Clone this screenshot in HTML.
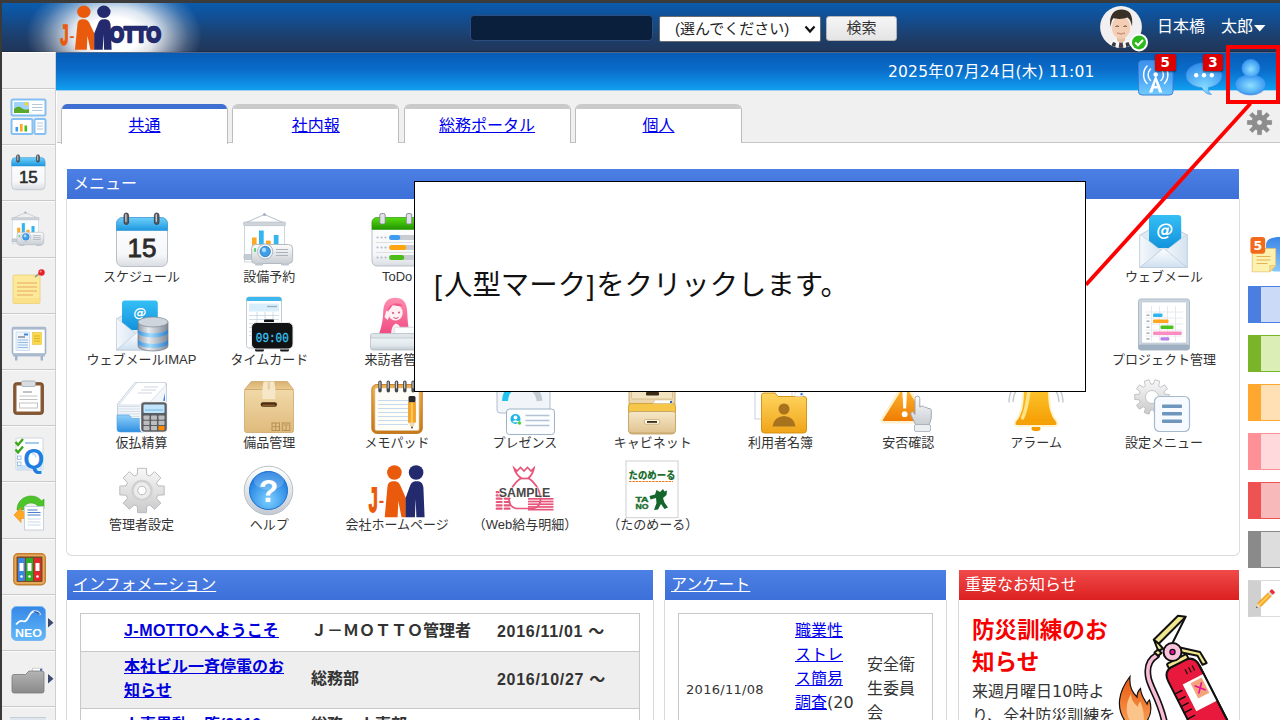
<!DOCTYPE html>
<html lang="ja">
<head>
<meta charset="utf-8">
<title>J-MOTTO</title>
<style>
*{box-sizing:border-box;margin:0;padding:0}
html,body{width:1280px;height:720px;overflow:hidden;background:#fff}
body{position:relative;font-family:"Liberation Sans","Noto Sans CJK JP",sans-serif;font-size:13px;color:#333}
.abs{position:absolute}
a{color:#0000ee;text-decoration:underline}
/* top */
#strip{left:0;top:0;width:1280px;height:3px;background:#3b3b3b}
#topbar{left:0;top:3px;width:1280px;height:49px;background:linear-gradient(#0a5cad 0%,#0f529c 22%,#18477f 50%,#1e3d68 76%,#20365a 100%);border-bottom:1px solid #1a2c48}
#glow{left:20px;top:3px;width:190px;height:49px;background:radial-gradient(ellipse 88px 56px at 94px 32px,rgba(255,255,255,1) 0%,rgba(255,255,255,1) 30%,rgba(255,255,255,.85) 48%,rgba(255,255,255,.5) 66%,rgba(255,255,255,.18) 84%,rgba(255,255,255,0) 100%)}
#leftdark{left:0;top:3px;width:80px;height:49px;background:linear-gradient(90deg,rgba(20,40,70,.0),rgba(20,40,70,0))}
#search{left:470px;top:15px;width:183px;height:26px;background:#0a1f3b;border:1px solid #2b4d80;border-radius:4px}
#sel{left:659px;top:16px;width:162px;height:26px;background:#fff;border:1px solid #6d6d6d;border-radius:2px;font-size:15px;color:#222;line-height:23px;padding-left:15px;white-space:nowrap}
#btn{left:826px;top:16px;width:71px;height:25px;background:linear-gradient(#f6f6f6,#e4e4e4);border:1px solid #b5b5b5;border-radius:3px;font-size:15px;color:#333;text-align:center;line-height:21px}
#uname{left:1157px;top:15px;font-size:16px;color:#fff;white-space:nowrap;line-height:24px}
/* second bar */
#bar2{left:56px;top:53px;width:1224px;height:37px;background:linear-gradient(#075bb5 0%,#0a6cc9 45%,#0e8be2 80%,#10a0ee 100%)}
#barsep{left:56px;top:52px;width:1224px;height:1px;background:#53688a}
#bar2line{left:56px;top:90px;width:1224px;height:1px;background:#9fd0f0}
#date{left:888px;top:61px;font-family:'DejaVu Sans','Noto Sans CJK JP',sans-serif;font-size:15.500px;letter-spacing:.200px;color:#fff;white-space:nowrap;line-height:22px}
/* sidebar */
#side{left:0;top:52px;width:56px;height:668px;background:#f0f0f0;border-right:1px solid #cfcfcf;border-top:1px solid #fff}
#sideedge{left:0;top:0;width:2px;height:720px;background:#3a3a3a}
.sep{left:2px;width:53px;height:2px;background:#c9c9c9;border-bottom:1px solid #fbfbfb}
/* tabs */
#tabbg{left:57px;top:91px;width:1223px;height:51px;background:#f0f0f0}
#tabline{left:57px;top:142px;width:1223px;height:1px;background:#c4c4c4}
.tab{top:103.500px;width:167px;height:39.500px;background:#fff;border:1.500px solid #bcbcbc;border-top:none;border-bottom:none;border-radius:6px 6px 0 0;overflow:hidden;text-align:center;font-size:16px;line-height:20px;padding-top:12.500px}
.tab:before{content:"";position:absolute;left:0;top:0;right:0;height:5.800px;background:#cacaca}
.tab.on{height:40px}
.tab.on:before{background:#3f6fd0}
/* panels */
.ph{height:30px;background:linear-gradient(#4c80e4,#3d70d8);color:#fff;font-size:16px;line-height:29px;padding-left:6px;white-space:nowrap}
.ph a{color:#fff}
.pb{border:1px solid #d9d9d9;border-top:none;background:#fff}
.mi{width:128px;text-align:center;font-size:13px;color:#333;line-height:16px;white-space:nowrap}
.it{font-size:16px;font-weight:bold;line-height:24px;white-space:nowrap;color:#333}
.it a{color:#0000dd}
.dt{letter-spacing:.7px}
/* callout */
#callout{left:414px;top:181px;width:672px;height:211px;background:#fff;border:1px solid #000}
#ctext{left:434px;top:264px;font-size:28.400px;line-height:42px;color:#111;white-space:nowrap}
#redbox{left:1226px;top:45px;width:54px;height:59px;border:4px solid #ff0000}
</style>
</head>
<body>
<div id="strip" class="abs"></div>
<div id="topbar" class="abs"></div>
<div id="glow" class="abs"></div>
<div id="search" class="abs"></div>
<div id="sel" class="abs">(選んでください)</div>
<div id="btn" class="abs">検索</div>
<div id="uname" class="abs">日本橋　太郎</div>
<div id="bar2" class="abs"></div>
<div id="bar2line" class="abs"></div><div id="barsep" class="abs"></div>
<div id="date" class="abs">2025年07月24日(木) 11:01</div>

<div id="side" class="abs"></div>
<div id="sideedge" class="abs"></div>
<div class="abs sep" style="top:88px"></div>
<div class="abs sep" style="top:144px"></div>
<div class="abs sep" style="top:200px"></div>
<div class="abs sep" style="top:257px"></div>
<div class="abs sep" style="top:313px"></div>
<div class="abs sep" style="top:369px"></div>
<div class="abs sep" style="top:425px"></div>
<div class="abs sep" style="top:481px"></div>
<div class="abs sep" style="top:538px"></div>
<div class="abs sep" style="top:594px"></div>
<div class="abs sep" style="top:650px"></div>
<div class="abs sep" style="top:706px"></div>
<svg class="abs" style="left:10.5px;top:98.6px;overflow:visible" width="35" height="36" viewBox="0 0 35 36"><rect x=".5" y=".5" width="34" height="16" rx="1.500" fill="#fff" stroke="#86c0f2" stroke-width="2"/>
<rect x="3" y="3" width="15" height="11" fill="#9fd4f8"/><path d="M3 14V10q4-4 7.500-1t7.500 1v4z" fill="#5aa82a"/><circle cx="15.500" cy="5" r="1.800" fill="#ffd21e"/>
<path d="M21 5.500h10.500M21 8.500h10.500M21 11.500h10.500" stroke="#b9c8d6" stroke-width="1.200"/>
<rect x=".5" y="20" width="21" height="15" rx="1.500" fill="#fff" stroke="#86c0f2" stroke-width="2"/>
<rect x="4.500" y="28" width="2.600" height="4.500" fill="#3a9af0"/><rect x="9" y="25" width="2.600" height="7.500" fill="#ffa51e"/><rect x="13.500" y="26.500" width="2.600" height="6" fill="#4cbc1a"/>
<rect x="23.500" y="20" width="11" height="15" rx="1.500" fill="#fff" stroke="#86c0f2" stroke-width="2"/>
<path d="M26 24h6M26 27h6M26 30h6" stroke="#b9c8d6" stroke-width="1.200"/></svg>
<svg class="abs" style="left:9.5px;top:154.4px;overflow:visible" width="36.7" height="36.7" viewBox="0 0 56 56"><rect x="2.5" y="5.5" width="51" height="49" rx="6" fill="url(#gPaper)" stroke="#b9bfc7"/>
<path d="M2.5 18.5V11.5a6 6 0 0 1 6-6h39a6 6 0 0 1 6 6v7z" fill="url(#gBlueH)" stroke="#2a92d4" stroke-width=".6"/>
<rect x="10" y="1" width="4.6" height="11.5" rx="2.3" fill="#5a5f66" stroke="#33373c" stroke-width=".8"/><rect x="11.2" y="2" width="1.4" height="8" rx=".7" fill="#c8ccd2"/>
<rect x="40.4" y="1" width="4.6" height="11.5" rx="2.3" fill="#5a5f66" stroke="#33373c" stroke-width=".8"/><rect x="41.6" y="2" width="1.4" height="8" rx=".7" fill="#c8ccd2"/>
<text x="28" y="45" text-anchor="middle" font-family="Liberation Sans,sans-serif" font-size="26" fill="#2b2b2b" stroke="#2b2b2b" stroke-width=".900">15</text></svg>
<svg class="abs" style="left:9.5px;top:210.9px;overflow:visible" width="36.7" height="36.7" viewBox="0 0 56 56"><path d="M23.5 2.5L5 10.5M23.5 2.5L42 10.5" stroke="#b9c0c8" stroke-width="1" fill="none"/><circle cx="23.5" cy="2.5" r="1.6" fill="#aab2bb"/>
<rect x="3.5" y="13" width="40" height="37" fill="#fdfeff" stroke="#cfd5dc"/>
<rect x="2.5" y="10" width="42" height="3.6" rx="1" fill="#cdd4db" stroke="#b4bcc5" stroke-width=".6"/>
<rect x="11" y="25.5" width="4.6" height="20" fill="#ffa826"/><rect x="18" y="18.5" width="4.7" height="26" fill="#33b5ee"/>
<rect x="25" y="28.6" width="4.7" height="14" fill="#ffa826"/><rect x="32.8" y="23" width="4.7" height="20" fill="#33b5ee"/>
<rect x="3" y="42.5" width="8" height="5" rx="1.5" fill="#c5ccd4" stroke="#a9b1ba" stroke-width=".6"/>
<rect x="10.6" y="32.5" width="41" height="19" rx="4" fill="url(#gSilver)" stroke="#b3bac2"/>
<rect x="14" y="51" width="8" height="2.5" rx="1" fill="#c0c6cd"/><rect x="40" y="51" width="8" height="2.5" rx="1" fill="#c0c6cd"/>
<circle cx="24.2" cy="39.5" r="7.6" fill="#f4f6f8" stroke="#aeb6bf"/><circle cx="24.2" cy="39.5" r="5.2" fill="#3f9fe8" stroke="#2a78c0" stroke-width=".8"/><circle cx="23" cy="38" r="2.2" fill="#a8dcff"/>
<path d="M35 37.5h12M35 40.5h12M35 43.5h12" stroke="#aab2bb" stroke-width="1.2"/>
<rect x="13.2" y="36" width="1.6" height="4" rx=".8" fill="#35c84a"/></svg>
<svg class="abs" style="left:13px;top:270px;overflow:visible" width="32" height="34" viewBox="0 0 32 34"><rect x="0" y="5" width="27" height="28.500" rx="1" fill="#fde99a" stroke="#e8cc78" stroke-width=".8"/>
<path d="M0 28h27v5.500H0z" fill="#f9dc80" opacity=".6"/>
<path d="M4 13h20M4 17h20M4 21h20M4 25h16" stroke="#e8a860" stroke-width="1"/>
<path d="M22 7l4.500-3.500" stroke="#999" stroke-width="1.600"/><circle cx="28.500" cy="2.500" r="3.200" fill="#e8202a"/><circle cx="27.600" cy="1.600" r="1" fill="#ff9a9a"/></svg>
<svg class="abs" style="left:11.5px;top:326.5px;overflow:visible" width="34" height="34" viewBox="0 0 34 34"><rect x=".500" y=".500" width="33" height="26.500" rx="1" fill="#fff" stroke="#9fb2c8" stroke-width="1.600"/>
<rect x="0" y="0" width="34" height="2.600" fill="#a9bace"/>
<rect x="4" y="5" width="13.500" height="18.500" fill="#eef5fc" stroke="#b9cbe0" stroke-width=".6"/><rect x="12" y="6.500" width="4" height="2" fill="#3a8ae0"/><path d="M6 10h7" stroke="#556" stroke-width="1"/><path d="M5.500 13h10.500M5.500 15.500h10.500M5.500 18h10.500M5.500 20.500h10.500" stroke="#8ab4e0" stroke-width=".9"/>
<rect x="20.500" y="5.500" width="9" height="12" fill="#fbd84a" stroke="#e0b830" stroke-width=".5"/><path d="M22 9h6M22 11.500h6M22 14h6" stroke="#d8a820" stroke-width=".8"/>
<rect x="1" y="27" width="32" height="2.400" fill="#a9bace"/><rect x="3" y="29" width="2.400" height="4.500" fill="#9fb2c8"/><rect x="28.600" y="29" width="2.400" height="4.500" fill="#9fb2c8"/></svg>
<svg class="abs" style="left:12.7px;top:380.8px;overflow:visible" width="31" height="34" viewBox="0 0 31 34"><rect x=".800" y="1.800" width="29.500" height="31.500" rx="2.500" fill="#8a5a34" stroke="#6e4424" stroke-width="1"/>
<rect x="3.500" y="4.500" width="24" height="26" fill="#fff"/>
<rect x="8.500" y="0" width="14" height="5.500" rx="1.500" fill="#d9dde2" stroke="#9aa2ab" stroke-width=".7"/>
<path d="M10 11h9" stroke="#999" stroke-width="1.200"/><path d="M6.500 15h18M6.500 18.500h18" stroke="#c3c3c3" stroke-width="1.200"/><rect x="6.500" y="22" width="18" height="5" fill="none" stroke="#c3c3c3" stroke-width="1"/></svg>
<svg class="abs" style="left:13.5px;top:437px;overflow:visible" width="31" height="35" viewBox="0 0 31 35"><rect x="2" y="1" width="27" height="32" rx="1" fill="#fff" stroke="#c9d3de" stroke-width=".9"/><path d="M3 28h25v5H3z" fill="#cfe4f8"/>
<path d="M11 6h14" stroke="#6aa8e0" stroke-width="1.200"/>
<path d="M1.500 5l2.500 3l5-6" stroke="#3aa81a" stroke-width="2.400" fill="none"/><path d="M1.500 12.500l2.500 3l5-6" stroke="#3aa81a" stroke-width="2.400" fill="none"/>
<rect x="3.500" y="19" width="3.500" height="3.500" fill="#fff" stroke="#8ab4e0" stroke-width=".8"/><rect x="3.500" y="25" width="3.500" height="3.500" fill="#fff" stroke="#8ab4e0" stroke-width=".8"/>
<text x="19.800" y="31" text-anchor="middle" font-family="Liberation Sans,sans-serif" font-weight="bold" font-size="27" fill="#1f7fe0" stroke="#fff" stroke-width="1" paint-order="stroke">Q</text>
<path d="M18 17q4-1 4 3.500" stroke="#bfe0ff" stroke-width="1.500" fill="none"/></svg>
<svg class="abs" style="left:13.5px;top:495.5px;overflow:visible" width="31" height="35" viewBox="0 0 31 35"><path d="M3 14C3 5 10 0 17 0c5 0 8.500 2 10.500 5l2.500-2v9.500H20.500l3-2.800C22 8 20 7 17 7C12.500 7 9.500 10 9.500 14z" fill="#4cc42a" stroke="#3aa41c" stroke-width=".6"/>
<path d="M0 19l7-7.500v4h5.500v7H7V26.500z" fill="#ffa826" stroke="#e88a10" stroke-width=".6"/>
<rect x="10.500" y="10.500" width="19" height="23.500" fill="#fff" stroke="#c3ccd6" stroke-width=".9"/>
<path d="M13.500 14h10M13.500 16.500h13M13.500 19h13" stroke="#4a7ec8" stroke-width="1.100"/><path d="M13.500 23h13M13.500 26h13M13.500 29h13" stroke="#c8d8ea" stroke-width="1.100"/></svg>
<svg class="abs" style="left:12.5px;top:552.5px;overflow:visible" width="33" height="33" viewBox="0 0 33 33"><rect x=".800" y=".800" width="31.500" height="31" rx="4" fill="#e8a85a" stroke="#c4802e" stroke-width="1.400"/>
<rect x="3.500" y="3.500" width="26" height="25.500" rx="1" fill="#7a4c24"/>
<rect x="5" y="5" width="7" height="23" rx="1" fill="#3a86e0"/><rect x="13" y="5" width="7" height="23" rx="1" fill="#2fae2a"/><rect x="21" y="5" width="7" height="23" rx="1" fill="#e0282a"/>
<g fill="#fff"><rect x="6.500" y="10" width="4" height="8"/><rect x="14.500" y="10" width="4" height="8"/><rect x="22.500" y="10" width="4" height="8"/><circle cx="8.500" cy="23.500" r="1.300"/><circle cx="16.500" cy="23.500" r="1.300"/><circle cx="24.500" cy="23.500" r="1.300"/></g></svg>
<svg class="abs" style="left:10.8px;top:605.6px;overflow:visible" width="35" height="35" viewBox="0 0 35 35"><defs><linearGradient id="gNeo" x1="0" y1="0" x2="0" y2="1"><stop offset="0" stop-color="#3688e6"/><stop offset="1" stop-color="#62b8f8"/></linearGradient></defs>
<rect x=".500" y=".500" width="34" height="34" rx="5" fill="url(#gNeo)" stroke="#7ab6f0" stroke-width="1"/>
<path d="M5 18.500c3-3.500 5-4.500 7-3.200c2 .7 3.500-.5 5-3.300c2-4 3.500-7 7-6.800c3 0 4.500 1.800 5.500 4" stroke="#fff" stroke-width="1.700" fill="none"/><path d="M22 5.500q5-1.500 8 4q-4-3-8-4z" fill="#2a4e9a"/>
<text x="17.500" y="30.500" text-anchor="middle" font-family="Liberation Sans,sans-serif" font-weight="bold" font-size="11.500" fill="#fff" textLength="27" lengthAdjust="spacingAndGlyphs">NEO</text></svg>
<svg class="abs" style="left:47.8px;top:617.5px;overflow:visible" width="6" height="10" viewBox="0 0 6 10"><path d="M0 0L5.500 4.700L0 9.400z" fill="#3c4a6e"/></svg>
<svg class="abs" style="left:12px;top:668px;overflow:visible" width="32" height="26" viewBox="0 0 32 26"><defs><linearGradient id="gFld" x1="0" y1="0" x2="0" y2="1"><stop offset="0" stop-color="#b4b4b4"/><stop offset="1" stop-color="#8a8a8a"/></linearGradient></defs>
<path d="M20.500 .300h10v4h-10z" fill="#fff" stroke="#aaa" stroke-width=".5"/><rect x="28" y=".800" width="2" height="2" fill="#3a5ad0"/>
<path d="M0 8.500a2 2 0 0 1 2-2h11.500l3.500-3.500H30a2 2 0 0 1 2 2V23a2 2 0 0 1-2 2H2a2 2 0 0 1-2-2z" fill="url(#gFld)" stroke="#7a7a7a" stroke-width=".8"/></svg>
<svg class="abs" style="left:47.8px;top:674.3px;overflow:visible" width="6" height="10" viewBox="0 0 6 10"><path d="M0 0L5.500 4.700L0 9.400z" fill="#3c4a6e"/></svg>
<div class="abs" style="left:10px;top:717px;width:36px;height:3px;background:#dfe6ee;border-top:1px solid #c3ced9"></div>

<div id="tabbg" class="abs"></div>
<div id="tabline" class="abs"></div>
<div class="abs tab on" style="left:61px"><a>共通</a></div>
<div class="abs tab" style="left:232.300px"><a>社内報</a></div>
<div class="abs tab" style="left:403.600px"><a>総務ポータル</a></div>
<div class="abs tab" style="left:575px"><a>個人</a></div>

<svg class="abs" style="left:0px;top:0px;overflow:visible" width="200" height="56" viewBox="0 0 200 56"><g transform="translate(60.5,3.7) scale(.92,.85)">
<text x="-.200" y="48.600" font-family="Liberation Sans,sans-serif" font-weight="bold" font-size="35" fill="#ea5a0c" stroke="#ea5a0c" stroke-width="1.800" textLength="9" lengthAdjust="spacingAndGlyphs">J</text>
<text x="9.800" y="43.500" font-family="Liberation Sans,sans-serif" font-weight="bold" font-size="18" fill="#ea5a0c" textLength="5.400" lengthAdjust="spacingAndGlyphs">-</text>
<circle cx="25.400" cy="9.500" r="7.300" fill="#ea5a0c"/>
<path d="M15.700 54.200L18.400 24.500C18.800 19.500 21 18.200 24.800 18.200C28.800 18.200 30.400 20 31.800 23.500L36.800 35V54.200H32.500L29.300 38L28.600 54.200Z" fill="#ea5a0c"/>
<circle cx="47.100" cy="9.500" r="7.300" fill="#232b6e"/>
<path d="M36.600 54.200V35L40.800 23.500C42 19.800 43.800 18.200 47.400 18.200C52 18.200 53.800 20 54.400 24.500L55.600 54.200H47.400L46.700 36L45.900 54.200Z" fill="#232b6e"/>
</g><text x="109.600" y="42.400" font-family="Liberation Sans,sans-serif" font-weight="bold" font-size="21.500" fill="#232b6e" stroke="#232b6e" stroke-width="2.400" stroke-linejoin="round" textLength="51.400" lengthAdjust="spacingAndGlyphs">OTTO</text></svg>
<svg class="abs" style="left:803.5px;top:23.5px;overflow:visible" width="12" height="10" viewBox="0 0 12 10"><path d="M1.500 2.500L6 7.500L10.500 2.500" fill="none" stroke="#111" stroke-width="2.200"/></svg>
<svg class="abs" style="left:1099.8px;top:6px;overflow:visible" width="50" height="50" viewBox="0 0 50 50"><defs><clipPath id="avc"><circle cx="21" cy="21" r="20.900"/></clipPath></defs>
<circle cx="21" cy="21" r="20.900" fill="#f1efef"/>
<g clip-path="url(#avc)">
<path d="M8 42q1-7 9-8.500l4 2l4-2q9 1.500 10 8.500z" fill="#f8f8fa"/>
<path d="M10.500 42l2.500-6l3 1l-1 5zM31 42l-2.500-6l-3 1l1 5z" fill="#3b3a40"/>
<path d="M19.500 36l1.500-1.500l1.500 1.500l1 6h-5z" fill="#4a3f48"/>
<path d="M17 28h8v7l-4 2l-4-2z" fill="#e9bfa4"/>
<ellipse cx="21" cy="21.500" rx="9.300" ry="11" fill="#f3cdb4"/>
<path d="M10.500 21C8.500 9 14 3.500 21.500 3.500S33.500 8 32 20.500C31 15.500 29.500 12.500 27.500 11.500C24 13 17 13.500 13.500 12C11.500 14 11.200 17 10.500 21z" fill="#3a3028"/>
<path d="M15.500 20.500q1.800-1 3.400 0M23.500 20.500q1.800-1 3.400 0" stroke="#5a4030" stroke-width="1" fill="none"/>
<path d="M17 27q4 3 8 0q-4 1.200-8 0z" fill="#fff" stroke="#b9705a" stroke-width=".6"/>
</g>
<circle cx="39" cy="36.400" r="9" fill="#fff"/><circle cx="39" cy="36.400" r="7" fill="#2db81c"/>
<path d="M35.200 36.500l2.800 2.800l5-5.300" stroke="#fff" stroke-width="2" fill="none"/></svg>
<svg class="abs" style="left:1254px;top:25px;overflow:visible" width="12" height="8" viewBox="0 0 12 8"><path d="M0 0h11.500L5.750 6.500z" fill="#fff"/></svg>
<svg class="abs" style="left:1138px;top:60.3px;overflow:visible" width="36" height="36" viewBox="0 0 36 36"><defs><linearGradient id="gAnt" x1="0" y1="0" x2="0" y2="1"><stop offset="0" stop-color="#3f92ee"/><stop offset=".5" stop-color="#4aa4f4"/><stop offset="1" stop-color="#72ccff"/></linearGradient>
<radialGradient id="gChat" cx=".5" cy=".8" r=".8"><stop offset="0" stop-color="#86dcff"/><stop offset="1" stop-color="#2f8cec"/></radialGradient></defs>
<rect x=".5" y=".5" width="34.500" height="34.500" rx="3.500" fill="url(#gAnt)" stroke="#3a7fd6" stroke-width="1"/>
<circle cx="17.700" cy="14.500" r="2.300" fill="#fff"/>
<path d="M17.700 15L24.500 32.500H21L19.700 28.500H15.700L14.400 32.500H11zM17.700 21.500l-1.200 4.500h2.400z" fill="#fff"/>
<g fill="none" stroke="#fff" stroke-width="1.500" stroke-linecap="round"><path d="M12.500 9a8 8 0 0 0 0 11.500M9 6a13 13 0 0 0 0 17.500"/><path d="M23 9a8 8 0 0 1 0 11.500M26.500 6a13 13 0 0 1 0 17.500"/></g></svg>
<svg class="abs" style="left:1185.8px;top:63.2px;overflow:visible" width="36" height="32" viewBox="0 0 36 32"><path d="M18 0C28 0 36 5.500 36 12.500C36 18.500 30 23.500 22.500 24.500C22 28 23.500 30 25.500 31.500C20.500 31.500 17.500 28.500 16 24.800C7 24 0 19 0 12.500C0 5.500 8 0 18 0z" fill="url(#gChat)" stroke="#3a86e0" stroke-width=".6"/>
<circle cx="10.200" cy="12.200" r="2.200" fill="#fff"/><circle cx="18" cy="12.200" r="2.200" fill="#fff"/><circle cx="25.800" cy="12.200" r="2.200" fill="#fff"/></svg>
<div class="abs" style="left:1155px;top:54.300px;width:20.600px;height:16.800px;background:#dc0000;border-radius:2px;box-shadow:0 1px 2px rgba(0,0,0,.55);color:#fff;font:bold 13.500px/16.500px 'DejaVu Sans',sans-serif;text-align:center">5</div>
<div class="abs" style="left:1202.7px;top:54.300px;width:20.600px;height:16.800px;background:#dc0000;border-radius:2px;box-shadow:0 1px 2px rgba(0,0,0,.55);color:#fff;font:bold 13.500px/16.500px 'DejaVu Sans',sans-serif;text-align:center">3</div>
<svg class="abs" style="left:1235.2px;top:59px;overflow:visible" width="32" height="37" viewBox="0 0 32 37"><ellipse cx="15.500" cy="25.500" rx="15.300" ry="10" fill="url(#gPerson)" stroke="#2f86e6" stroke-width=".5"/>
<path d="M.5 27a15 8 0 0 0 30 0a15 9.500 0 0 1-30 0z" fill="#2a7ee0" opacity=".55"/>
<circle cx="15.800" cy="9.200" r="9" fill="url(#gPerson)" stroke="#3a8ce8" stroke-width=".5"/></svg>
<svg class="abs" style="left:1246.5px;top:110px;overflow:visible" width="25" height="25" viewBox="0 0 25 25"><path d="M24.6 10.5 L24.6 14.5 L20.0 14.5 L19.2 16.4 L22.5 19.7 L19.7 22.5 L16.4 19.2 L14.5 20.0 L14.5 24.6 L10.5 24.6 L10.5 20.0 L8.6 19.2 L5.3 22.5 L2.5 19.7 L5.8 16.4 L5.0 14.5 L0.4 14.5 L0.4 10.5 L5.0 10.5 L5.8 8.6 L2.5 5.3 L5.3 2.5 L8.6 5.8 L10.5 5.0 L10.5 0.4 L14.5 0.4 L14.5 5.0 L16.4 5.8 L19.7 2.5 L22.5 5.3 L19.2 8.6 L20.0 10.5Z" fill="#8d8d8d" stroke="#7a7a7a" stroke-width=".5"/><circle cx="12.500" cy="12.500" r="2.800" fill="#f0f0f0" stroke="#777" stroke-width=".6"/></svg>
<!-- menu panel -->
<div class="abs ph" style="left:67px;top:169px;width:1172px">メニュー</div>
<div class="abs pb" style="left:66px;top:199px;width:1174px;height:357px;border-radius:0 0 6px 6px;border-width:1.500px;border-color:#dcdcdc"></div>

<svg width="0" height="0" style="position:absolute"><defs>
<linearGradient id="gBlueH" x1="0" y1="0" x2="0" y2="1"><stop offset="0" stop-color="#6fd0fa"/><stop offset="1" stop-color="#1c97df"/></linearGradient>
<linearGradient id="gPaper" x1="0" y1="0" x2="0" y2="1"><stop offset="0" stop-color="#ffffff"/><stop offset=".75" stop-color="#f6f7f9"/><stop offset="1" stop-color="#d9dde2"/></linearGradient>
<linearGradient id="gGreenH" x1="0" y1="0" x2="0" y2="1"><stop offset="0" stop-color="#55dd10"/><stop offset="1" stop-color="#239400"/></linearGradient>
<linearGradient id="gSilver" x1="0" y1="0" x2="0" y2="1"><stop offset="0" stop-color="#fdfdfd"/><stop offset="1" stop-color="#c9ced4"/></linearGradient>
<linearGradient id="gEnv" x1="0" y1="0" x2="0" y2="1"><stop offset="0" stop-color="#ffffff"/><stop offset="1" stop-color="#cfe0f0"/></linearGradient>
<linearGradient id="gEnvS" x1="0" y1="0" x2="1" y2="0"><stop offset="0" stop-color="#f4f8fc"/><stop offset="1" stop-color="#d4e2f0"/></linearGradient>
<linearGradient id="gCard" x1="0" y1="0" x2="0" y2="1"><stop offset="0" stop-color="#35bff5"/><stop offset="1" stop-color="#1293dc"/></linearGradient>
<linearGradient id="gBox" x1="0" y1="0" x2="0" y2="1"><stop offset="0" stop-color="#f1d9a8"/><stop offset="1" stop-color="#dfba7c"/></linearGradient>
<linearGradient id="gBoxT" x1="0" y1="0" x2="0" y2="1"><stop offset="0" stop-color="#d8b070"/><stop offset="1" stop-color="#eacb90"/></linearGradient>
<linearGradient id="gOrange" x1="0" y1="0" x2="0" y2="1"><stop offset="0" stop-color="#ffd23a"/><stop offset="1" stop-color="#f59a00"/></linearGradient>
<linearGradient id="gWarn" x1="0" y1="0" x2="0" y2="1"><stop offset="0" stop-color="#ffc23a"/><stop offset="1" stop-color="#ef7a00"/></linearGradient>
<linearGradient id="gFolder" x1="0" y1="0" x2="0" y2="1"><stop offset="0" stop-color="#ffd560"/><stop offset="1" stop-color="#f0a418"/></linearGradient>
<linearGradient id="gTray" x1="0" y1="0" x2="0" y2="1"><stop offset="0" stop-color="#8fd0fa"/><stop offset="1" stop-color="#2f8fe0"/></linearGradient>
<linearGradient id="gDB" x1="0" y1="0" x2="1" y2="0"><stop offset="0" stop-color="#8e98a4"/><stop offset=".35" stop-color="#e8ecf0"/><stop offset="1" stop-color="#7d8894"/></linearGradient>
<linearGradient id="gDBb" x1="0" y1="0" x2="1" y2="0"><stop offset="0" stop-color="#3c8ed8"/><stop offset=".4" stop-color="#9fdcff"/><stop offset="1" stop-color="#2f7fcc"/></linearGradient>
<radialGradient id="gHelp" cx=".5" cy=".75" r=".7"><stop offset="0" stop-color="#7cd0ff"/><stop offset="1" stop-color="#1878de"/></radialGradient>
<linearGradient id="gRing" x1="0" y1="0" x2="0" y2="1"><stop offset="0" stop-color="#ffffff"/><stop offset="1" stop-color="#c4cad2"/></linearGradient>
<linearGradient id="gGear" x1="0" y1="0" x2="0" y2="1"><stop offset="0" stop-color="#f8f8f8"/><stop offset="1" stop-color="#cacaca"/></linearGradient>
<linearGradient id="gPink" x1="0" y1="0" x2="0" y2="1"><stop offset="0" stop-color="#ff8fb0"/><stop offset="1" stop-color="#f04a80"/></linearGradient>
<linearGradient id="gDesk" x1="0" y1="0" x2="0" y2="1"><stop offset="0" stop-color="#f2f6f8"/><stop offset=".700" stop-color="#e2e9ed"/><stop offset="1" stop-color="#c2cad0"/></linearGradient>
<linearGradient id="gPad" x1="0" y1="0" x2="0" y2="1"><stop offset="0" stop-color="#f0b050"/><stop offset="1" stop-color="#c87818"/></linearGradient>
<linearGradient id="gCab" x1="0" y1="0" x2="0" y2="1"><stop offset="0" stop-color="#f6e8c8"/><stop offset="1" stop-color="#e0c390"/></linearGradient>
<radialGradient id="gPerson" cx=".5" cy=".55" r=".6"><stop offset="0" stop-color="#8fe0ff"/><stop offset="1" stop-color="#2a8cf0"/></radialGradient>
</defs></svg>

<svg class="abs" style="left:113.5px;top:212.0px;overflow:visible" width="56" height="56" viewBox="0 0 56 56"><rect x="2.5" y="5.5" width="51" height="49" rx="6" fill="url(#gPaper)" stroke="#b9bfc7"/>
<path d="M2.5 18.5V11.5a6 6 0 0 1 6-6h39a6 6 0 0 1 6 6v7z" fill="url(#gBlueH)" stroke="#2a92d4" stroke-width=".6"/>
<rect x="10" y="1" width="4.6" height="11.5" rx="2.3" fill="#5a5f66" stroke="#33373c" stroke-width=".8"/><rect x="11.2" y="2" width="1.4" height="8" rx=".7" fill="#c8ccd2"/>
<rect x="40.4" y="1" width="4.6" height="11.5" rx="2.3" fill="#5a5f66" stroke="#33373c" stroke-width=".8"/><rect x="41.6" y="2" width="1.4" height="8" rx=".7" fill="#c8ccd2"/>
<text x="28" y="45" text-anchor="middle" font-family="Liberation Sans,sans-serif" font-size="26" fill="#2b2b2b" stroke="#2b2b2b" stroke-width=".900">15</text></svg>
<div class="abs mi" style="left:77.5px;top:268.8px">スケジュール</div>
<svg class="abs" style="left:241.3px;top:212.0px;overflow:visible" width="56" height="56" viewBox="0 0 56 56"><path d="M23.5 2.5L5 10.5M23.5 2.5L42 10.5" stroke="#b9c0c8" stroke-width="1" fill="none"/><circle cx="23.5" cy="2.5" r="1.6" fill="#aab2bb"/>
<rect x="3.5" y="13" width="40" height="37" fill="#fdfeff" stroke="#cfd5dc"/>
<rect x="2.5" y="10" width="42" height="3.6" rx="1" fill="#cdd4db" stroke="#b4bcc5" stroke-width=".6"/>
<rect x="11" y="25.5" width="4.6" height="20" fill="#ffa826"/><rect x="18" y="18.5" width="4.7" height="26" fill="#33b5ee"/>
<rect x="25" y="28.6" width="4.7" height="14" fill="#ffa826"/><rect x="32.8" y="23" width="4.7" height="20" fill="#33b5ee"/>
<rect x="3" y="42.5" width="8" height="5" rx="1.5" fill="#c5ccd4" stroke="#a9b1ba" stroke-width=".6"/>
<rect x="10.6" y="32.5" width="41" height="19" rx="4" fill="url(#gSilver)" stroke="#b3bac2"/>
<rect x="14" y="51" width="8" height="2.5" rx="1" fill="#c0c6cd"/><rect x="40" y="51" width="8" height="2.5" rx="1" fill="#c0c6cd"/>
<circle cx="24.2" cy="39.5" r="7.6" fill="#f4f6f8" stroke="#aeb6bf"/><circle cx="24.2" cy="39.5" r="5.2" fill="#3f9fe8" stroke="#2a78c0" stroke-width=".8"/><circle cx="23" cy="38" r="2.2" fill="#a8dcff"/>
<path d="M35 37.5h12M35 40.5h12M35 43.5h12" stroke="#aab2bb" stroke-width="1.2"/>
<rect x="13.2" y="36" width="1.6" height="4" rx=".8" fill="#35c84a"/></svg>
<div class="abs mi" style="left:205.3px;top:268.8px">設備予約</div>
<svg class="abs" style="left:369.1px;top:212.0px;overflow:visible" width="56" height="56" viewBox="0 0 56 56"><rect x="3" y="5.5" width="50" height="48.5" rx="5" fill="url(#gPaper)" stroke="#b9bfc7"/>
<path d="M3 17.5V10.5a5 5 0 0 1 5-5h40a5 5 0 0 1 5 5v7z" fill="url(#gGreenH)" stroke="#2c9a08" stroke-width=".6"/>
<rect x="10.8" y="1.5" width="5.4" height="10.5" rx="1.6" fill="#dfe3e7" stroke="#7f868e" stroke-width=".9"/>
<rect x="37.3" y="1.5" width="5.4" height="10.5" rx="1.6" fill="#dfe3e7" stroke="#7f868e" stroke-width=".9"/>
<g fill="#b4bcd0"><circle cx="8.5" cy="25.5" r="1.1"/><circle cx="12.6" cy="25.5" r="1.1"/><circle cx="16.5" cy="25.5" r="1.1"/><circle cx="8.5" cy="35.5" r="1.1"/><circle cx="12.6" cy="35.5" r="1.1"/><circle cx="16.5" cy="35.5" r="1.1"/><circle cx="8.5" cy="45.5" r="1.1"/><circle cx="12.6" cy="45.5" r="1.1"/><circle cx="16.5" cy="45.5" r="1.1"/></g>
<path d="M7 30.5h43M7 40.5h43" stroke="#d4d8de" stroke-width=".8"/>
<rect x="20.2" y="23" width="29" height="5" rx="2.5" fill="#c9cdd2"/><rect x="20.2" y="23" width="11" height="5" rx="2.5" fill="#3f9af2"/>
<rect x="20.2" y="33" width="29" height="5" rx="2.5" fill="#c9cdd2"/><rect x="20.2" y="33" width="17" height="5" rx="2.5" fill="#ffa510"/>
<rect x="20.2" y="43" width="29" height="5" rx="2.5" fill="#c9cdd2"/><rect x="20.2" y="43" width="15" height="5" rx="2.5" fill="#4cbc1a"/></svg>
<div class="abs mi" style="left:333.1px;top:268.8px">ToDo</div>
<svg class="abs" style="left:1135.9px;top:212.0px;overflow:visible" width="56" height="56" viewBox="0 0 56 56"><path d="M3.8 23.0L27.5 10.0L51.2 23.0V55.5H3.8Z" fill="#dfe9f3" stroke="#b4c4d4" stroke-width=".8"/><rect x="13.0" y="3.0" width="32.2" height="33.0" rx="3" fill="url(#gCard)"/><text x="29.1" y="23.5" text-anchor="middle" font-family="DejaVu Sans,sans-serif" font-weight="bold" font-size="17" font-style="italic" fill="#fff">@</text><path d="M3.8 22.0L27.5 40.2L3.8 55.5Z" fill="url(#gEnvS)" stroke="#c0cedc" stroke-width=".6"/><path d="M51.2 22.0L27.5 40.2L51.2 55.5Z" fill="url(#gEnvS)" stroke="#c0cedc" stroke-width=".6"/><path d="M3.8 55.5L27.5 36.2L51.2 55.5Z" fill="url(#gEnv)" stroke="#b9c8d8" stroke-width=".7"/></svg>
<div class="abs mi" style="left:1099.9px;top:268.8px">ウェブメール</div>
<svg class="abs" style="left:113.5px;top:295.5px;overflow:visible" width="56" height="56" viewBox="0 0 56 56"><path d="M2.5 23.0L24.2 10.0L46.0 23.0V54.0H2.5Z" fill="#dfe9f3" stroke="#b4c4d4" stroke-width=".8"/><rect x="8.0" y="4.5" width="35.8" height="29.5" rx="3" fill="url(#gCard)"/><text x="25.9" y="20.6" text-anchor="middle" font-family="DejaVu Sans,sans-serif" font-weight="bold" font-size="13" font-style="italic" fill="#fff">@</text><path d="M2.5 22.0L24.2 39.5L2.5 54.0Z" fill="url(#gEnvS)" stroke="#c0cedc" stroke-width=".6"/><path d="M46.0 22.0L24.2 39.5L46.0 54.0Z" fill="url(#gEnvS)" stroke="#c0cedc" stroke-width=".6"/><path d="M2.5 54.0L24.2 35.5L46.0 54.0Z" fill="url(#gEnv)" stroke="#b9c8d8" stroke-width=".7"/>
<g>
<path d="M24 26v24a15 5 0 0 0 30 0V26z" fill="url(#gDB)" stroke="#6f7a86" stroke-width=".7"/>
<path d="M24 32.5a15 5 0 0 0 30 0v4a15 5 0 0 1-30 0z" fill="url(#gDBb)"/>
<path d="M24 43a15 5 0 0 0 30 0v4a15 5 0 0 1-30 0z" fill="url(#gDBb)"/>
<ellipse cx="39" cy="26" rx="15" ry="5" fill="#cfd5dc" stroke="#7d8894" stroke-width=".7"/>
</g></svg>
<div class="abs mi" style="left:77.5px;top:351.7px">ウェブメールIMAP</div>
<svg class="abs" style="left:241.3px;top:295.5px;overflow:visible" width="56" height="56" viewBox="0 0 56 56"><rect x="5.5" y="1" width="35" height="51" rx="2.5" fill="#ffffff" stroke="#c3cbd4"/>
<path d="M5.5 5V3.5a2.5 2.5 0 0 1 2.5-2.5h30a2.5 2.5 0 0 1 2.5 2.5V5z" fill="#3db7ee"/>
<rect x="8" y="7.5" width="30" height="8" fill="#d8eefb"/><path d="M26 10.5h10" stroke="#9ab0c4" stroke-width="1.4"/>
<path d="M8 19.5h30M8 23.5h30M8 27.5h30M8 31.5h30M8 35.5h30M8 39.5h30M16 16v30M24 16v30M32 16v30" stroke="#c4d3e0" stroke-width=".8"/>
<rect x="23" y="23.5" width="10" height="4" rx="1" fill="#111"/>
<rect x="14" y="51.5" width="9" height="4" rx="1.5" fill="#1a1a1a"/><rect x="39" y="51.5" width="9" height="4" rx="1.5" fill="#1a1a1a"/>
<rect x="10.5" y="26.5" width="41.5" height="26.5" rx="5" fill="#101214" stroke="#e8e8e8" stroke-width="1"/>
<text x="31.3" y="45.5" text-anchor="middle" font-family="Liberation Mono,monospace" font-size="13.5" textLength="33" lengthAdjust="spacingAndGlyphs" fill="#38c6f4" stroke="#38c6f4" stroke-width=".3">09:00</text></svg>
<div class="abs mi" style="left:205.3px;top:351.7px">タイムカード</div>
<svg class="abs" style="left:369.1px;top:295.5px;overflow:visible" width="56" height="56" viewBox="0 0 56 56"><path d="M10 38C12.500 31 14 24 14.200 16C14.500 6 19 1.800 26.200 1.800S38 6 38.200 16C38.500 24 39 31 41 38Z" fill="url(#gPink)"/>
<ellipse cx="26.500" cy="16.800" rx="7.200" ry="7.800" fill="#fff0f4"/>
<path d="M18.500 15C20 7.500 28 5.500 34 9.500C30 10.500 26 10 23.500 8.500C22.500 11.500 21 13.500 18.500 15z" fill="#f25a8e"/>
<circle cx="24" cy="17" r=".900" fill="#d03a70"/><circle cx="30" cy="16.500" r=".900" fill="#d03a70"/><path d="M24.500 21.500q2.500 2 5 0" stroke="#e0407a" stroke-width="1" fill="none"/>
<path d="M22 38q.500-9 5-10.500q5 1.500 6.500 10.500z" fill="#fff0f4"/>
<path d="M17.500 14.500l-2 6.500l3 3l3.500-6.500z" fill="#fff0f4"/>
<rect x="25.200" y="31.200" width="24" height="8" rx="1.500" fill="#fbfcfd" stroke="#cdd4da" stroke-width=".800"/>
<rect x="1.500" y="38" width="53" height="16" rx="2.500" fill="url(#gDesk)" stroke="#b4bcc4" stroke-width=".800"/>
<rect x="1.500" y="37.500" width="53" height="4.500" rx="2" fill="#dfe6ea" stroke="#b4bec6" stroke-width=".700"/></svg>
<div class="abs mi" style="left:333.1px;top:351.7px">来訪者管理</div>
<svg class="abs" style="left:1135.9px;top:295.5px;overflow:visible" width="56" height="56" viewBox="0 0 56 56"><rect x="2.5" y="3" width="51" height="51" rx="2.5" fill="#ccd6e0" stroke="#aebac6"/>
<rect x="5.5" y="6" width="45" height="41" fill="#ffffff" stroke="#b4c0cc" stroke-width=".6"/>
<rect x="2.5" y="48.5" width="51" height="5.5" rx="2" fill="#9fb0c2"/>
<path d="M9 16h38M9 22h38M9 28h38M9 34h38M9 40h38M15.5 10v35M23.5 10v35M31.5 10v35M39.5 10v35" stroke="#dfe5eb" stroke-width=".8"/>
<g fill="#9aa6b2"><rect x="10.5" y="18.5" width="3" height="1.4"/><rect x="10.5" y="24.5" width="3" height="1.4"/><rect x="10.5" y="30.5" width="3" height="1.4"/><rect x="10.5" y="36.5" width="3" height="1.4"/><rect x="10.5" y="42.2" width="3" height="1.4"/></g>
<rect x="17" y="17.5" width="9.5" height="3.4" rx="1" fill="#2fb4f0"/>
<rect x="17" y="23.5" width="15.5" height="3.4" rx="1" fill="#ffa51e"/>
<rect x="24.5" y="29.5" width="13" height="3.4" rx="1" fill="#4cc41e"/>
<rect x="17" y="35.5" width="28.8" height="3.4" rx="1" fill="#ff8cc0"/>
<rect x="24.5" y="41.2" width="8.8" height="3.4" rx="1" fill="#b980ea"/></svg>
<div class="abs mi" style="left:1099.9px;top:351.7px">プロジェクト管理</div>
<svg class="abs" style="left:113.5px;top:379.0px;overflow:visible" width="56" height="56" viewBox="0 0 56 56"><path d="M21 3.5h30a1.5 1.5 0 0 1 1.5 1.5v30L33 47H3.5V25z" fill="#f2f6fa" stroke="#b9c7d6" stroke-width=".8"/>
<path d="M23 3.5h28.5v3L33 26H5z" fill="#ffffff" stroke="#c3cfdb" stroke-width=".6"/>
<path d="M30 8h14M27 11h15M24 14h14" stroke="#c9d3dd" stroke-width=".9"/>
<path d="M4 27.5h29M4 30h29M4 32.5h29M4 35h29M4 37.500h29" stroke="#cbd6e2" stroke-width=".7"/>
<path d="M51 14v18l-6 6z" fill="#3c8be0"/>
<path d="M3 36h12l3 3.500h18V53H6a3 3 0 0 1-3-3z" fill="url(#gTray)" stroke="#4d9de0" stroke-width=".6"/>
<rect x="26.500" y="22.500" width="27" height="31" rx="4" fill="#5b5f64" stroke="#f4f4f4" stroke-width="1.4"/>
<rect x="29.500" y="25.500" width="21" height="8.500" rx="1" fill="#bfe4fb"/><path d="M31 31h18" stroke="#8ec8ee" stroke-width="1.600"/>
<g fill="#bdbdbd"><rect x="29.500" y="36.500" width="6" height="4.200" rx=".8"/><rect x="37" y="36.500" width="6" height="4.200" rx=".8"/><rect x="44.500" y="36.500" width="6" height="4.200" rx=".8"/><rect x="29.500" y="41.800" width="6" height="4.200" rx=".8"/><rect x="37" y="41.800" width="6" height="4.200" rx=".8"/><rect x="44.500" y="41.800" width="6" height="4.200" rx=".8"/><rect x="29.500" y="47" width="6" height="4.200" rx=".8"/><rect x="37" y="47" width="6" height="4.200" rx=".8"/></g>
<rect x="44.500" y="47" width="6" height="4.200" rx=".8" fill="#ff8a00"/></svg>
<div class="abs mi" style="left:77.5px;top:434.8px">仮払精算</div>
<svg class="abs" style="left:241.3px;top:379.0px;overflow:visible" width="56" height="56" viewBox="0 0 56 56"><path d="M10.2 2.5h36.200L52.500 10.500H3.500z" fill="url(#gBoxT)" stroke="#c79f5e" stroke-width=".7"/>
<rect x="3.500" y="10.500" width="49" height="43" rx="2" fill="url(#gBox)" stroke="#c79f5e" stroke-width=".7"/>
<path d="M22.500 2.500h10.800l1 8v9.500h-12.900v-9.500z" fill="#f6e7c9"/><path d="M26.500 2.500h2.500v8h-2.500z" fill="#e8d0a4"/>
<rect x="19.700" y="23.300" width="16.300" height="4.400" rx="2.200" fill="#4a2d10"/><rect x="21" y="25.500" width="13.500" height="1.600" rx=".8" fill="#8a5a28"/>
<g fill="none" stroke="#b89055" stroke-width="1"><rect x="31" y="44" width="7.500" height="7.500"/><rect x="41.300" y="44" width="7.500" height="7.500"/><path d="M34.700 44v7.500M31 47.700h7.500M45 47v4.500M42.500 46h5"/></g></svg>
<div class="abs mi" style="left:205.3px;top:434.8px">備品管理</div>
<svg class="abs" style="left:369.1px;top:379.0px;overflow:visible" width="56" height="56" viewBox="0 0 56 56"><rect x="2.800" y="5.500" width="50.500" height="49" rx="5" fill="url(#gPad)" stroke="#b86f14" stroke-width=".8"/>
<rect x="6" y="9" width="44" height="42.500" rx="1.500" fill="#fffdf8" stroke="#d9c9a8" stroke-width=".6"/>
<path d="M9 21.500h30M9 25.500h30M9 29.500h30M9 33.500h30M9 37.500h30M9 41.500h30M9 45.500h30" stroke="#b9cfe8" stroke-width=".8"/>
<g fill="#44484d"><rect x="9.300" y="1.500" width="3.400" height="12" rx="1.700"/><rect x="17.600" y="1.500" width="3.400" height="12" rx="1.700"/><rect x="25.800" y="1.500" width="3.400" height="12" rx="1.700"/><rect x="34.100" y="1.500" width="3.400" height="12" rx="1.700"/><rect x="42.400" y="1.500" width="3.400" height="12" rx="1.700"/></g>
<g fill="#c9ced4"><rect x="10.300" y="2.500" width="1.200" height="7" rx=".6"/><rect x="18.600" y="2.500" width="1.200" height="7" rx=".6"/><rect x="26.800" y="2.500" width="1.200" height="7" rx=".6"/><rect x="35.100" y="2.500" width="1.200" height="7" rx=".6"/><rect x="43.400" y="2.500" width="1.200" height="7" rx=".6"/></g>
<rect x="39.500" y="17" width="7" height="6.500" rx="1.500" fill="#2a2a2a"/>
<rect x="39.500" y="23.500" width="7" height="20" fill="#f7a31c" stroke="#d98208" stroke-width=".5"/><rect x="41.800" y="23.500" width="2.200" height="20" fill="#ffc65a"/>
<path d="M39.500 43.500h7L43 50z" fill="#f3d9b0"/><path d="M41.900 47.800h2.200L43 50z" fill="#333"/></svg>
<div class="abs mi" style="left:333.1px;top:434.8px">メモパッド</div>
<svg class="abs" style="left:496.9px;top:379.0px;overflow:visible" width="56" height="56" viewBox="0 0 56 56"><rect x="0" y="-6" width="53" height="40" rx="3" fill="#f1f5fa" stroke="#a9b8c9" stroke-width=".9" transform="translate(0,0)"/>
<path d="M8 22a17 17 0 0 1 27-13.500" stroke="#22c4ee" stroke-width="6" fill="none"/>
<path d="M37.500 10.800a17 17 0 0 1 5 11.200" stroke="#c3cad2" stroke-width="6" fill="none"/>
<rect x="9.500" y="30" width="48" height="25.500" rx="3" fill="#fbfdff" stroke="#9fb2c6" stroke-width="1"/>
<circle cx="18.500" cy="40" r="5" fill="#20b4e6"/><circle cx="18.500" cy="38.500" r="1.900" fill="#fff"/><path d="M15 43.300q3.500-4 7 0" fill="#fff"/>
<circle cx="22.500" cy="44" r="1.900" fill="#4ccc2a" stroke="#fff" stroke-width=".5"/>
<path d="M28.500 36.500h24M28.500 41.500h24M28.500 46.500h24" stroke="#b4c3d3" stroke-width="1.300"/></svg>
<div class="abs mi" style="left:460.9px;top:434.8px">プレゼンス</div>
<svg class="abs" style="left:624.7px;top:379.0px;overflow:visible" width="56" height="56" viewBox="0 0 56 56"><rect x="4" y="-8" width="46" height="63" rx="3" fill="url(#gCab)" stroke="#c4a368" stroke-width=".9"/>
<rect x="6.500" y="-2" width="41" height="22" rx="1.500" fill="#f3e3c0" stroke="#cfb27c" stroke-width=".7"/>
<rect x="21" y="13" width="13" height="3.400" rx="1" fill="#3a2a18"/>
<path d="M5 24.500h44l1.500 3v6H3.500v-6z" fill="#f6c648" stroke="#c9962a" stroke-width=".7"/><path d="M30 21h16l2 3.500H28z" fill="#fff" stroke="#c9b88f" stroke-width=".5"/><rect x="45" y="22" width="2" height="2" fill="#3366cc"/>
<rect x="3.500" y="32.500" width="47" height="21.500" rx="2.500" fill="url(#gCab)" stroke="#c4a368" stroke-width=".9"/>
<rect x="19.500" y="40.500" width="15" height="4.600" rx="1.200" fill="#fff8e4" stroke="#b89a62" stroke-width=".6"/><rect x="22" y="42" width="10" height="1.800" fill="#3a2a18"/></svg>
<div class="abs mi" style="left:588.7px;top:434.8px">キャビネット</div>
<svg class="abs" style="left:752.5px;top:379.0px;overflow:visible" width="56" height="56" viewBox="0 0 56 56"><rect x="2" y="-4" width="26" height="44" fill="#ffffff" stroke="#b9c6d4" stroke-width=".8"/>
<rect x="3" y="-3" width="13" height="16" fill="#2fa5e8"/><circle cx="9.500" cy="3" r="3.200" fill="#d9f0ff"/><path d="M3.500 13q6-9 12 0z" fill="#d9f0ff"/>
<path d="M19 2h14M19 5.500h14M19 9h14" stroke="#b4c3d3" stroke-width="1.200"/>
<rect x="22" y="-2" width="17" height="20" fill="#fff" stroke="#b9c6d4" stroke-width=".7"/><path d="M25 3h11M25 6.500h11M25 10h11" stroke="#b4c3d3" stroke-width="1.200"/>
<path d="M8.500 16.500a2.500 2.500 0 0 1 2.500-2.500h11l3 3.500h26a2.500 2.500 0 0 1 2.500 2.500V51a3 3 0 0 1-3 3H11.500a3 3 0 0 1-3-3z" fill="url(#gFolder)" stroke="#d08c10" stroke-width=".9"/>
<path d="M42 13h8v4.500h-8z" fill="#fff" stroke="#b9c6d4" stroke-width=".5"/><rect x="47.500" y="14.200" width="2" height="2" fill="#3366cc"/>
<circle cx="31" cy="30" r="5.500" fill="#a8731c"/><path d="M19.500 47.500q1-9.500 11.500-10.500q10.500 1 11.500 10.500z" fill="#a8731c"/></svg>
<div class="abs mi" style="left:716.5px;top:434.8px">利用者名簿</div>
<svg class="abs" style="left:880.3px;top:379.0px;overflow:visible" width="56" height="56" viewBox="0 0 56 56"><path d="M24.700 3.500L47.500 40a2 2 0 0 1-1.800 3.200H3.700A2 2 0 0 1 1.900 40z" fill="url(#gWarn)" stroke="#fff1d0" stroke-width="2.400" stroke-linejoin="round"/>
<path d="M22.300 12h4.800l-1 17.500h-2.800z" fill="#fff"/><circle cx="24.700" cy="35.200" r="2.900" fill="#fff"/>
<path d="M35.500 45.500l-4.500-9.500q-1-3 1.500-3.500l2.500 3V19.500a2.400 2.400 0 0 1 4.800 0V28l2.500-1q2 0 2.500 1.500q2-1 3.200 1q2.500-1 3.300 1.500V39l-2 6.500z" fill="url(#gSilver)" stroke="#9aa2ab" stroke-width=".9"/>
<rect x="34.500" y="45.500" width="16" height="7" rx="1.500" fill="#eceff2" stroke="#a4acb5" stroke-width=".8"/></svg>
<div class="abs mi" style="left:844.3px;top:434.8px">安否確認</div>
<svg class="abs" style="left:1008.1px;top:379.0px;overflow:visible" width="56" height="56" viewBox="0 0 56 56"><path d="M8.500 11a24 24 0 0 0-3.500 12M4.500 9.500a30 30 0 0 0-3.500 14" stroke="#c3c8ce" stroke-width="1.400" fill="none"/>
<path d="M47.500 11a24 24 0 0 1 3.500 12M51.500 9.500a30 30 0 0 1 3.500 14" stroke="#c3c8ce" stroke-width="1.400" fill="none"/>
<ellipse cx="28" cy="49.500" rx="5" ry="3.200" fill="#f59c00" stroke="#fff" stroke-width="1"/>
<path d="M28 -2C36 -2 40 4 41 14C41.500 28 43 36 49 42.500Q50.500 46.500 47 47H9Q5.500 46.500 7 42.500C13 36 14.500 28 15 14C16 4 20 -2 28 -2Z" fill="url(#gOrange)" stroke="#fff3d0" stroke-width="2"/>
<path d="M21 12c-1.500 8-2 18-6.500 27" stroke="#ffec9a" stroke-width="3.500" fill="none" stroke-linecap="round" opacity=".85"/>
<path d="M9 43.500h38" stroke="#f3a60c" stroke-width="2" stroke-linecap="round"/></svg>
<div class="abs mi" style="left:972.1px;top:434.8px">アラーム</div>
<svg class="abs" style="left:1135.9px;top:379.0px;overflow:visible" width="56" height="56" viewBox="0 0 56 56"><path d="M33.3 15.5 L33.3 20.5 L28.7 20.8 L27.9 23.2 L31.5 26.2 L28.6 30.2 L24.6 27.7 L22.6 29.2 L23.7 33.7 L19.0 35.2 L17.3 30.9 L14.7 30.9 L13.0 35.2 L8.3 33.7 L9.4 29.2 L7.4 27.7 L3.4 30.2 L0.5 26.2 L4.1 23.2 L3.3 20.8 L-1.3 20.5 L-1.3 15.5 L3.3 15.2 L4.1 12.8 L0.5 9.8 L3.4 5.8 L7.4 8.3 L9.4 6.8 L8.3 2.3 L13.0 0.8 L14.7 5.1 L17.3 5.1 L19.0 0.8 L23.7 2.3 L22.6 6.8 L24.6 8.3 L28.6 5.8 L31.5 9.8 L27.9 12.8 L28.7 15.2Z" fill="url(#gGear)" stroke="#b4b8bd" stroke-width=".8"/><circle cx="16" cy="18" r="6.500" fill="#fff" stroke="#b9bdc2" stroke-width=".8"/>
<rect x="18.500" y="17.500" width="35" height="35" rx="5" fill="#f7faff" stroke="#a7bacd" stroke-width="1.200"/>
<rect x="26" y="25.500" width="20" height="3.600" rx=".8" fill="#6f97bd"/><rect x="26" y="33" width="20" height="3.600" rx=".8" fill="#6f97bd"/><rect x="26" y="40.500" width="20" height="3.600" rx=".8" fill="#6f97bd"/></svg>
<div class="abs mi" style="left:1099.9px;top:434.8px">設定メニュー</div>
<svg class="abs" style="left:113.5px;top:462.5px;overflow:visible" width="56" height="56" viewBox="0 0 56 56"><path d="M50.2 23.1 L50.2 31.9 L43.8 32.2 L42.5 35.3 L46.8 40.1 L40.6 46.3 L35.8 42.0 L32.7 43.3 L32.4 49.7 L23.6 49.7 L23.3 43.3 L20.2 42.0 L15.4 46.3 L9.2 40.1 L13.5 35.3 L12.2 32.2 L5.8 31.9 L5.8 23.1 L12.2 22.8 L13.5 19.7 L9.2 14.9 L15.4 8.7 L20.2 13.0 L23.3 11.7 L23.6 5.3 L32.4 5.3 L32.7 11.7 L35.8 13.0 L40.6 8.7 L46.8 14.9 L42.5 19.7 L43.8 22.8Z" fill="url(#gGear)" stroke="#b9bcc0" stroke-width="1"/>
<circle cx="28" cy="27.500" r="9.500" fill="#ececec" stroke="#d0d0d0" stroke-width="2.400"/><circle cx="28" cy="27.500" r="4.200" fill="#fff" stroke="#bcbcbc" stroke-width="1"/></svg>
<div class="abs mi" style="left:77.5px;top:516.7px">管理者設定</div>
<svg class="abs" style="left:241.3px;top:462.5px;overflow:visible" width="56" height="56" viewBox="0 0 56 56"><circle cx="27.500" cy="27.500" r="24.300" fill="url(#gRing)" stroke="#b9c0c9" stroke-width="1"/>
<circle cx="27.500" cy="27.500" r="19" fill="url(#gHelp)" stroke="#1a6fd0" stroke-width="1"/>
<ellipse cx="28" cy="18" rx="15" ry="9" fill="#fff" opacity=".18"/>
<text x="27.500" y="39" text-anchor="middle" font-family="Liberation Sans,sans-serif" font-weight="bold" font-size="32" fill="#fff">?</text></svg>
<div class="abs mi" style="left:205.3px;top:516.7px">ヘルプ</div>
<svg class="abs" style="left:369.1px;top:462.5px;overflow:visible" width="56" height="56" viewBox="0 0 56 56"><text x="-.200" y="48.600" font-family="Liberation Sans,sans-serif" font-weight="bold" font-size="35" fill="#ea5a0c" stroke="#ea5a0c" stroke-width="1.800" textLength="9" lengthAdjust="spacingAndGlyphs">J</text>
<text x="9.800" y="43.500" font-family="Liberation Sans,sans-serif" font-weight="bold" font-size="18" fill="#ea5a0c" textLength="5.400" lengthAdjust="spacingAndGlyphs">-</text>
<circle cx="25.400" cy="9.500" r="7.300" fill="#ea5a0c"/>
<path d="M15.700 54.200L18.400 24.500C18.800 19.500 21 18.200 24.800 18.200C28.800 18.200 30.400 20 31.800 23.500L36.800 35V54.200H32.500L29.300 38L28.600 54.200Z" fill="#ea5a0c"/>
<circle cx="47.100" cy="9.500" r="7.300" fill="#232b6e"/>
<path d="M36.600 54.200V35L40.800 23.500C42 19.800 43.800 18.200 47.400 18.200C52 18.200 53.800 20 54.400 24.500L55.600 54.200H47.400L46.700 36L45.900 54.200Z" fill="#232b6e"/></svg>
<div class="abs mi" style="left:333.1px;top:516.7px">会社ホームページ</div>
<svg class="abs" style="left:496.9px;top:462.5px;overflow:visible" width="56" height="56" viewBox="0 0 56 56"><g fill="none" stroke="#e8557a" stroke-width="1.700">
<path d="M17 5l3 3l3.500-3.500l3.500 3.500l3.500-3.500l3.500 3.500l3-3q-1 6-5.500 10q10 7 12 19q1 9-7 11.500H19q-8-2.500-7-11.500q2-12 12-19Q18.500 11 17 5z"/>
<path d="M23 15.500h9"/>
</g>
<g fill="#e8557a"><rect x="-1.400" y="28" width="7" height="2.200" rx="1"/><rect x="-1.400" y="31.300" width="7" height="2.200" rx="1"/><rect x="-1.400" y="34.600" width="7" height="2.200" rx="1"/><rect x="-1.400" y="37.900" width="7" height="2.200" rx="1"/><rect x="-1.400" y="41.200" width="7" height="2.200" rx="1"/><rect x="-1.400" y="44.500" width="7" height="2.200" rx="1"/><rect x="6.600" y="34.600" width="7" height="2.200" rx="1"/><rect x="6.600" y="37.900" width="7" height="2.200" rx="1"/><rect x="6.600" y="41.200" width="7" height="2.200" rx="1"/><rect x="6.600" y="44.500" width="7" height="2.200" rx="1"/>
<rect x="31" y="35" width="25.500" height="1.700"/><rect x="31" y="37.700" width="25.500" height="1.700"/><rect x="31" y="40.400" width="25.500" height="1.700"/><rect x="31" y="43.100" width="25.500" height="1.700"/><rect x="31" y="45.800" width="25.500" height="1.700"/></g>

<text x="27.500" y="34" text-anchor="middle" font-family="Liberation Sans,sans-serif" font-weight="bold" font-size="13.500" fill="#484848" stroke="#fff" stroke-width="1.200" paint-order="stroke" textLength="51.500" lengthAdjust="spacingAndGlyphs">SAMPLE</text></svg>
<div class="abs mi" style="left:460.9px;top:516.7px">（Web給与明細）</div>
<svg class="abs" style="left:624.7px;top:462.5px;overflow:visible" width="56" height="56" viewBox="0 0 56 56"><rect x="1" y="-2" width="52" height="56.700" fill="#fff" stroke="#cfcfcf" stroke-width="1"/>
<text x="27" y="16" text-anchor="middle" font-family="Noto Sans CJK JP,sans-serif" font-weight="900" font-size="10" fill="#1a6e2e" textLength="47" lengthAdjust="spacingAndGlyphs">たのめーる</text>
<path d="M4 18.500h44" stroke="#ee7a1a" stroke-width="1" stroke-dasharray="2.500 .8"/>
<text x="10.400" y="39" font-family="Liberation Sans,sans-serif" font-weight="bold" font-size="7.500" fill="#1a6e2e" stroke="#1a6e2e" stroke-width=".400" textLength="13" lengthAdjust="spacingAndGlyphs">TA</text><text x="10.400" y="45.800" font-family="Liberation Sans,sans-serif" font-weight="bold" font-size="7.500" fill="#1a6e2e" stroke="#1a6e2e" stroke-width=".400" textLength="13" lengthAdjust="spacingAndGlyphs">NO</text>
<path d="M24.500 33l5.500-1.500l1.500-4.500l3.500 2l3-3l1.500 2.500l2.500-1l-.500 4.500l-3.500 3l1.500 4.500l3.500 5l-3.500 1.500l-3.500-5l-3 5.500l-4 .500l2.500-7l-.500-5l-5.500 1.500z" fill="#14662a"/></svg>
<div class="abs mi" style="left:588.7px;top:516.7px">（たのめーる）</div>


<!-- information -->
<div class="abs ph" style="left:67px;top:570px;width:586px;height:30px;line-height:29px"><a>インフォメーション</a></div>
<div class="abs pb" style="left:66px;top:600px;width:588px;height:130px"></div>
<div class="abs" style="left:80px;top:613px;width:560px;height:120px;border:1px solid #c8c8c8;background:#fff"></div>
<div class="abs" style="left:81px;top:651px;width:558px;height:58px;background:#eeeeee;border-top:1px solid #c8c8c8;border-bottom:1px solid #c8c8c8"></div>
<div class="abs it" style="left:124px;top:619px"><a><span style="letter-spacing:.450px">J-MOTTO</span>へようこそ</a></div>
<div class="abs it" style="left:311px;top:619px">Ｊ－ＭＯＴＴＯ管理者</div>
<div class="abs it dt" style="left:497px;top:620px">2016/11/01 ～</div>
<div class="abs it" style="left:124px;top:655px"><a>本社ビル一斉停電のお<br>知らせ</a></div>
<div class="abs it" style="left:311px;top:667px">総務部</div>
<div class="abs it dt" style="left:497px;top:668px">2016/10/27 ～</div>
<div class="abs it" style="left:124px;top:713px"><a>人事異動一覧(2016</a></div>
<div class="abs it" style="left:311px;top:713px">総務・人事部</div>
<!-- enquete -->
<div class="abs ph" style="left:665px;top:570px;width:281px;height:30px;line-height:29px"><a>アンケート</a></div>
<div class="abs pb" style="left:664px;top:600px;width:283px;height:130px"></div>
<div class="abs" style="left:678px;top:613px;width:255px;height:120px;border:1px solid #c8c8c8;background:#fff"></div>
<div class="abs" style="left:686px;top:681px;font-family:'DejaVu Sans','Noto Sans CJK JP',sans-serif;font-size:13px;letter-spacing:.3px;line-height:18px;color:#333">2016/11/08</div>
<div class="abs" style="left:795px;top:619px;font-size:16px;line-height:24px;white-space:nowrap;color:#333"><a>職業性<br>ストレ<br>ス簡易<br>調査</a><span style="font-family:'DejaVu Sans',sans-serif">(20<br>16/12/</span></div>
<div class="abs" style="left:867px;top:653px;font-size:16px;line-height:24px;white-space:nowrap;color:#333">安全衛<br>生委員<br>会</div>
<!-- important -->
<div class="abs ph" style="left:959px;top:570px;width:280px;height:30px;line-height:29px;background:linear-gradient(#f04a4a,#dc2020)">重要なお知らせ</div>
<div class="abs pb" style="left:958px;top:600px;width:282px;height:130px"></div>
<div class="abs" style="left:972px;top:615px;font-size:22.6px;line-height:32px;font-weight:bold;color:#f80000;white-space:nowrap">防災訓練のお<br>知らせ</div>
<div class="abs" style="left:972px;top:680px;font-size:16px;line-height:24px;color:#333;white-space:nowrap">来週月曜日<span style="font-family:'DejaVu Sans',sans-serif">10</span>時よ<br>り、全社防災訓練を</div>
<svg class="abs" style="left:1100px;top:600px;overflow:visible;clip-path:inset(1px 0 0 0)" width="139" height="120" viewBox="0 0 139 120"><defs><linearGradient id="gFlame" x1="0" y1="0" x2="0" y2="1"><stop offset="0" stop-color="#e8560c"/><stop offset="1" stop-color="#f79a50"/></linearGradient></defs>
<path d="M25 121C16 108 18 92 30 76.500C29 88 33 93 37 97C37 93 38 91 40.500 88.500C41 96 45 100 47 104C47.500 102 48 101 49.500 100C52 108 51 115 47 121Z" fill="url(#gFlame)" stroke="#111" stroke-width="1.200"/>
<path d="M30 121C25 112 26 102 31 94C31.500 101 35 104 38 107C38 104 39 103 40.500 101.500C42 107 44 110 44 121Z" fill="#fbc48a"/>
<g stroke="#111" stroke-width="2" stroke-linejoin="round" stroke-linecap="round">
<path d="M56.500 55.500C49 60 46.500 68 48.500 78S60 100 64.500 122" fill="none" stroke-width="6.800"/>
<path d="M56.500 55.500C49 60 46.500 68 48.500 78S60 100 64.500 122" fill="none" stroke="#f9bcd6" stroke-width="3.600"/>
<path d="M53.700 39.700L78 15.800L85.800 16.700L58.700 43.700Z" fill="#f1e78e"/>
<path d="M85 18L73 42" fill="none" stroke-width="2"/>
<path d="M54 40L58.300 51L63 48.500L58.700 43.700Z" fill="#f1e78e"/>
<path d="M54.500 52.500l3.500-3l3.500 3.500l-3.500 3z" fill="#f1e78e"/>
<path d="M80 47.500L100 52L106.700 63L102.500 64.700L97.500 55.800L81.700 52.500Z" fill="#f1e78e"/>
<g transform="translate(78.500,63) rotate(-27)">
<path d="M-17.500 12q0-12 12-12h11q12 0 12 12v80h-35z" fill="#e8193c"/>
<rect x="-11" y="-4.500" width="22" height="5" rx="1.500" fill="#f1e78e"/>
<rect x="-6" y="21" width="23.500" height="30" fill="#fff" stroke="none"/>
<rect x="1.500" y="23.500" width="12.500" height="17" fill="#f4a47a" stroke="none"/>
<path d="M4.500 28l7 8M11.500 28l-7 8" stroke="#e8109a" stroke-width="1.600"/>
<path d="M-17.500 26h8M-17.500 33h8M-17.500 40h8M-17.500 47h8M-17.500 54h8M-17.500 61h8" stroke-width="1.500"/>
<path d="M3 9v4.500M7 9v4.500M11 9v4.500" stroke-width="1.200"/>
<path d="M17.500 12v80" fill="none"/>
</g>
<circle cx="72.500" cy="52" r="9" fill="#f9c3dc"/><circle cx="72.500" cy="52" r="2.600" fill="#e8109a" stroke-width="1.200"/>
</g></svg>


<div class="abs" style="left:1248px;top:286px;width:40px;height:37px;background:#cbdaf7;border:1px solid #4a7ee0;border-left:13.500px solid #4a7ee0"></div>
<div class="abs" style="left:1248px;top:335px;width:40px;height:37px;background:#daeeb6;border:1px solid #7ab428;border-left:13.500px solid #7ab428"></div>
<div class="abs" style="left:1248px;top:384px;width:40px;height:37px;background:#ffe0b4;border:1px solid #ffa72e;border-left:13.500px solid #ffa72e"></div>
<div class="abs" style="left:1248px;top:433px;width:40px;height:37px;background:#ffd9dc;border:1px solid #ff9098;border-left:13.500px solid #ff9098"></div>
<div class="abs" style="left:1248px;top:482px;width:40px;height:37px;background:#f7b9b9;border:1px solid #ee5252;border-left:13.500px solid #ee5252"></div>
<div class="abs" style="left:1248px;top:531px;width:40px;height:37px;background:#dddddd;border:1px solid #8a8a8a;border-left:13.500px solid #8a8a8a"></div>
<div class="abs" style="left:1248px;top:580px;width:40px;height:37px;background:#fff;border:1px solid #dcdcdc;border-left:13.500px solid #d0d0d0"></div>
<svg class="abs" style="left:1257.5px;top:589.5px;overflow:visible" width="18" height="18" viewBox="0 0 18 18"><g transform="scale(.88)">
<g transform="rotate(-45 9 9)"><rect x="-2" y="6.500" width="17" height="5.500" fill="#f7a824" stroke="#d88a10" stroke-width=".5"/><rect x="-2" y="8.300" width="17" height="1.800" fill="#ffd060"/>
<rect x="15" y="6.500" width="2" height="5.500" fill="#d9d9d9"/><rect x="17" y="6.500" width="4" height="5.500" rx="1" fill="#e8303a"/>
<path d="M-2 6.500L-7 9.250L-2 12z" fill="#f3d9b0"/><path d="M-5.200 8.200L-7 9.250L-5.200 10.300z" fill="#333"/></g>
</g></svg>
<svg class="abs" style="left:1250px;top:236.5px;overflow:visible;clip-path:inset(0 0 0 0)" width="30" height="36" viewBox="0 0 30 36"><defs><linearGradient id="gBub" x1="0" y1="0" x2="0" y2="1"><stop offset="0" stop-color="#3a86e6"/><stop offset="1" stop-color="#86c8ff"/></linearGradient></defs>
<path d="M16 8C16 2 22 0 30 0V34.500H24C18 33 16 28 16 22z" fill="url(#gBub)"/>
<path d="M2.200 11.500h23.500v17l-6 6.500H2.200z" fill="#fdf1b0" stroke="#dfc070" stroke-width=".8"/><path d="M25.700 28.500h-6V35z" fill="#f5dc88" stroke="#dfc070" stroke-width=".6"/>
<path d="M6.500 19.500h14M6.500 23h14M6.500 26.500h11" stroke="#e0b458" stroke-width="1"/>
<rect x=".400" y="0" width="14.800" height="16.700" rx="3" fill="#f26a1c"/>
<text x="7.800" y="13" text-anchor="middle" font-family="DejaVu Sans,sans-serif" font-weight="bold" font-size="12.500" fill="#fff">5</text></svg>

<!-- callout -->
<svg class="abs" style="left:0;top:0" width="1280" height="720"><line x1="1086" y1="284.800" x2="1250.500" y2="103.500" stroke="#ff0000" stroke-width="3.800"/></svg>
<div id="callout" class="abs"></div>
<div id="ctext" class="abs"><span style="margin-right:2.200px">[</span>人型マーク<span style="margin:0 1.600px 0 .600px">]</span>をクリックします。</div>
<div id="redbox" class="abs"></div>
</body>
</html>
